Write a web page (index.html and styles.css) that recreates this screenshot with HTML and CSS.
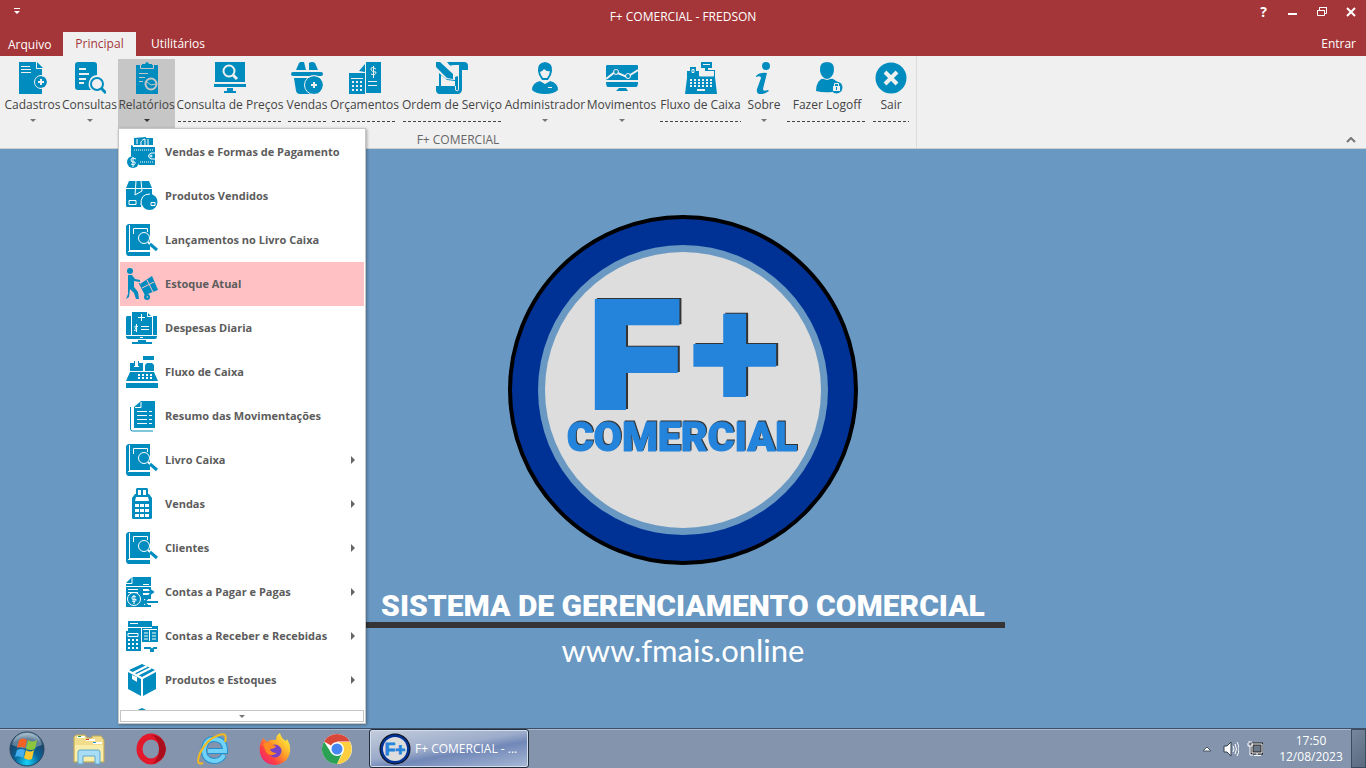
FILE: index.html
```html
<!DOCTYPE html>
<html lang="pt-BR">
<head>
<meta charset="utf-8">
<title>F+ COMERCIAL - FREDSON</title>
<link rel="stylesheet" href="styles.css">
</head>
<body>
<svg class="sprite" aria-hidden="true">
  <symbol id="doc-add" viewBox="0 0 32 32"><path d="M2 0h17v7h6v6a7 7 0 0 0 0 13v6H2z"/><path d="M20 0l6 6h-6z"/><path class="cut" d="M4 4.500h9M4 7.500h10M4 10.500h10"/><circle cx="24" cy="20" r="6"/><circle class="cut" cx="24" cy="20" r="6.500"/><path class="cut w2" d="M24 17v6M21 20h6"/></symbol>
  <symbol id="doc-search" viewBox="0 0 32 32"><path d="M4 0h16q3 0 3 3v10a9 9 0 0 0-6 15H4q-3 0-3-3V3q0-3 3-3z"/><path class="cut w2" d="M5 7h7M5 12h10M5 17h7M5 21h5"/><circle class="line w2" cx="23" cy="22" r="6"/><path class="line w3" d="M27 26l5 5"/></symbol>
  <symbol id="clipboard" viewBox="0 0 32 32"><path d="M5 3h22v29H5z"/><path class="cut" d="M9.500 3v3.500h13V3"/><path d="M11 5V2h3q2-4 4 0h3v3z"/><path class="cut" d="M8 11.500h9M8 15.500h6M8 19.500h4"/><circle class="cut w2" cx="20" cy="22" r="5.500"/><path class="cut" d="M16 20l4 3 5-1"/></symbol>
  <symbol id="monitor-search" viewBox="0 0 32 32"><path d="M1 0h30v20H1zM0 22h32v3H0zM13 26h6v3h3v2H10v-2h3z"/><path class="cut" d="M0 21.500h32"/><circle class="cut w2" cx="15" cy="9" r="5.500"/><path class="cut w3" d="M19 13l4 4"/></symbol>
  <symbol id="basket" viewBox="0 0 32 32"><path d="M5 8l3-7q2-2 5-1l2 8h3V1q3-2 6 0l3 7z"/><rect y="10" width="32" height="4" rx="2"/><path d="M3 16h26v14q-1 2-3 2H8q-2 0-3-3z"/><path class="cut" d="M2 14.500h28"/><circle cx="23" cy="23" r="9"/><circle class="cut" cx="23" cy="23" r="9.500"/><path class="cut w2" d="M23 20v6M20 23h6"/></symbol>
  <symbol id="budget" viewBox="0 0 32 32"><path d="M17 0h15v31H17z"/><path d="M10 9l6-7v8zM0 11h16v21H0z"/><path class="cut" d="M2 16.500h12M16.500 0v31M19 19.500h9M19 23.500h9"/><path class="cut w2 dot" d="M3 20h11M3 24h11M3 28h11"/><path class="cut" d="M27 7q-5-3-5 0t5 3q0 4-5 2M24.500 4v12"/></symbol>
  <symbol id="scroll" viewBox="0 0 32 32"><path d="M0 0l4-0 13 12v5l-6-1L0 5zM11 0h17q4 0 4 4v4h-6v20q-1 4-4 4H3q-3-1-3-4v-4h3V11l7 6 9 1V10z"/><path class="hole" d="M5 13l6 5 8 1v5H5zM18 3h4v11l-3 1v-3l-7-8z"/><path class="cut" d="M22.500 3v24q0 3-3 1v-4"/></symbol>
  <symbol id="person" viewBox="0 0 32 32"><path d="M9 9q-1-8 7-9 8 1 7 9l-1 4-3 5h-6l-3-5zM3 28q0-7 8-9l5 3 5-3q8 2 8 9-4 4-13 4T3 28z"/><path class="hole" d="M11 10q3-1 4-3 3 3 6 2l-1 4-2 3h-4l-2-3z"/><path class="cut" d="M10 18l6 3 6-3M19 25.500h4"/></symbol>
  <symbol id="monitor-chart" viewBox="0 0 32 32"><path d="M1 3h30q1 0 1 1v14H0V4zM0 20h32q0 5-2 5H2q-2 0-2-5zM13 26h7l2 3H10z"/><path class="cut w2" d="M0 17l9-7 12 5L32 8"/><circle cx="10" cy="10" r="2"/><circle class="cut" cx="10" cy="10" r="2.500"/><circle cx="22" cy="14" r="2"/><circle class="cut" cx="22" cy="14" r="2.500"/></symbol>
  <symbol id="register" viewBox="0 0 32 32"><path d="M16 0h11v6h-4v2h7v7l2 17H0L2 16V9h3V5h6v4h9V6h-4z"/><path class="cut" d="M18 2.500h7M7 7.500h2v3H7zM28.500 9v5h-14V9"/><path class="hole" d="M15 9h13v5H15zM12 27h8v2h-8z"/><path class="cut w2 dot" d="M5 18h22M5 21h22M5 24h22"/></symbol>
  <symbol id="info" viewBox="0 0 32 32"><circle cx="18" cy="4" r="4"/><path d="M8 14q4-4 11-3l-4 16q0 3 5 1l1 1q-6 4-10 3-3-1-2-5l4-11q0-3-5-1z"/></symbol>
  <symbol id="person-lock" viewBox="0 0 32 32"><path d="M9 7q0-7 7-7t7 7q0 6-4 9 5 1 8 5-7 0-6 9-9 1-16-1 0-11 8-13-4-3-4-9z"/><circle cx="25.500" cy="25.500" r="6"/><path class="hole" d="M22 24h7v5h-7z"/><path class="cut" d="M23.500 24v-2.500h4V24"/><path class="line" d="M25.500 25v3"/><path class="cut" d="M11 16q5 3 10 0"/></symbol>
  <symbol id="exit" viewBox="0 0 32 32"><circle cx="16" cy="16" r="15.500"/><path class="cut w4" d="M10 10l12 12M22 10L10 22"/></symbol>

  <symbol id="wallet" viewBox="0 0 32 32"><path d="M8 9V2l12-1v1h7v7zM7 10h22v19H13q-1-7-8-9V9z"/><path class="cut" d="M7 10.500h22M11 3v5M15 9q-1-5 4-6v7M22 3v7"/><path class="cut dash" d="M8 14h20M14 26h14"/><path class="cut" d="M29 17h-4q-5 3 0 6h4"/><circle class="cut" cx="25" cy="20" r="1"/><circle cx="7" cy="26" r="6"/><path class="cut" d="M10 23q-5-2-5 1t4 2q1 4-4 2M7 21v10"/></symbol>
  <symbol id="package-sold" viewBox="0 0 32 32"><path d="M3 1h20l3 7v7q-10-1-11 12H1q-1 0-1-2V8z"/><path class="cut" d="M0 8.500h26M10 1L9 15l7-4-1-10M3 20.500h7v4H3z"/><circle cx="23.500" cy="22" r="8"/><path class="cut" d="M15 25q-1-11 9-11M25 22.500h4v3h-4z"/></symbol>
  <symbol id="book" viewBox="0 0 32 32"><path d="M2 0h22v26H3v2h21v4H2q-2-1-2-3V2z"/><path class="cut" d="M3.500 1v26M2 27.500h22M7.500 10V4.500h14V8"/><circle cx="18" cy="14" r="6"/><circle class="cut" cx="18" cy="14" r="5.500"/><path class="cut w2" d="M22 18l4 4"/><path class="line w3" d="M24 20l7 6"/></symbol>
  <symbol id="porter" viewBox="0 0 32 32"><circle cx="4" cy="3" r="3"/><path d="M2 7h4l3 4 5 1v2l-6-1v6l4 5 1 7h-3l-2-6-4-4-1 8-3 2H0l2-5V11z"/><path d="M14 16l12-8 6 14-13 5z"/><path class="line" d="M13 15l8 15"/><circle class="line w2" cx="21" cy="29" r="2"/><path class="cut" d="M16 20l12-6M21 12l6 12"/></symbol>
  <symbol id="monitor-bill" viewBox="0 0 32 32"><path d="M6 0h15l5 5v18H6zM1 4h4v19H0V5zM27 4h4v19h-4zM0 24h31q0 3-2 3H2q-2 0-2-3zM12 28h8v2h6v2H6v-2h6z"/><path class="cut" d="M21.500 0v4.500H26M15.500 2v7M12 5.500h7M15 14.500h8M15 17.500h8M12 14.500q-4-1-3 1t2 2-3 1M10.500 12v8M14 25.500h3"/></symbol>
  <symbol id="register-small" viewBox="0 0 32 32"><path d="M4 7h4v4h5V7h4v8H4zM8 5h5v5H8zM19 9l2-2h5l2 2v6h-9zM17 0h11v4H17zM4 16h24l4 9H0zM0 27h32v5H0z"/><path class="hole" d="M9 5h3v5H9z"/><path class="cut w2 dot" d="M12 19h14M12 22h14"/></symbol>
  <symbol id="pages" viewBox="0 0 32 32"><path d="M8 7l7-6h14v27H8z"/><path class="line" d="M4.500 7v22q0 2 2 2H27"/><path class="cut" d="M9 7.500h6V2M11 11.500h10M23 11.500h3M11 15.500h10M23 15.500h3M11 19.500h10M23 19.500h3M11 23.500h10M23 23.500h3"/></symbol>
  <symbol id="calculator" viewBox="0 0 32 32"><path d="M11 0h10q1 0 1 2v4h1l3 4v20q0 1-2 1H8q-2 0-2-1V10l3-4h1V2q0-2 1-2z"/><path class="hole" d="M12 2h3v5h-3zM17 2h3v5h-3zM10 9h12l1 4H9zM9 16h4v3H9zM14 16h4v3h-4zM19 16h4v3h-4zM9 21h4v3H9zM14 21h4v3h-4zM19 21h4v3h-4zM9 26h4v3H9zM14 26h4v3h-4zM19 26h4v3h-4z"/></symbol>
  <symbol id="bill-pay" viewBox="0 0 32 32"><path d="M6 1h19v30H0V7z"/><path class="cut" d="M0 7.500h6V1M17 8.500h6M0 10.500h25M2 13.500h10M2 16.500h10"/><circle cx="8" cy="23" r="6"/><circle class="cut" cx="8" cy="23" r="6.500"/><path class="cut" d="M10 21q-4-2-4 1t4 1q0 4-4 2M8 19v9"/><path class="cut w6" d="M17 16h9M18 26h14"/><path class="line w2" d="M17 16h9M23 13l4 3-4 3M32 26H19M22 22l-4 4 4 4"/></symbol>
  <symbol id="bill-receive" viewBox="0 0 32 32"><path d="M2 1h24v6H2zM2 8h24v4H2zM15 6h17v16H15zM0 11h15v20H0z"/><path class="cut" d="M2 7.500h24M4 3.500h8M15.500 8v23M17 9.500h14M23.500 10v11M18 13h4M18 16h4M18 19h4M26 13h4M26 16h4M26 19h4M2 13.500h10v3H2z"/><path class="cut w2 dot" d="M2 20h12M2 24h12M2 28h12"/><path class="line w2" d="M18 28h6l2 2 2-2h3M24 31h4"/></symbol>
  <symbol id="box" viewBox="0 0 32 32"><path d="M16 0l13 6-13 7L3 6zM2 8l13 7v17L2 25zM30 8v17l-13 7V15z"/><path class="cut w2" d="M7 9L21 2M11 11L25 4"/><path d="M6 11l5 2v5l-5-3z" class="hole"/></symbol>
</svg>

<header>
  <div class="titlebar">
    <button class="quick" aria-label="Personalizar acesso rápido"><svg width="6" height="7"><path d="M0 0h6v1H0zM0 3h6L3 6z"/></svg></button>
    <h1>F+ COMERCIAL - FREDSON</h1>
    <div class="window-buttons">
      <button aria-label="Ajuda"><b>?</b></button>
      <button aria-label="Minimizar"><svg width="12" height="12"><path d="M1 7h9v2H1z"/></svg></button>
      <button aria-label="Restaurar"><svg width="12" height="12"><path class="outline" d="M1.500 4.500h7v5h-7zM3.500 4V1.500h7v6H9"/><path d="M1 4h8v1H1zM3 1h8v1H3z"/></svg></button>
      <button aria-label="Fechar"><svg width="12" height="12"><path class="outline thick" d="M2 2l8 8M10 2l-8 8"/></svg></button>
    </div>
  </div>
  <nav class="tabs">
    <button class="file">Arquivo</button>
    <button class="selected">Principal</button>
    <button>Utilitários</button>
    <button class="login">Entrar</button>
  </nav>
</header>

<section class="ribbon">
  <div class="group">
    <div class="tools">
      <button><svg><use href="#doc-add"/></svg>Cadastros<i class="down"></i></button>
      <button><svg><use href="#doc-search"/></svg>Consultas<i class="down"></i></button>
      <div class="open">
        <button aria-expanded="true"><svg><use href="#clipboard"/></svg>Relatórios<i class="down"></i></button>
        <div class="menu">
          <ul>
            <li><button><svg><use href="#wallet"/></svg>Vendas e Formas de Pagamento</button></li>
            <li><button><svg><use href="#package-sold"/></svg>Produtos Vendidos</button></li>
            <li><button><svg><use href="#book"/></svg>Lançamentos no Livro Caixa</button></li>
            <li><button class="active"><svg><use href="#porter"/></svg>Estoque Atual</button></li>
            <li><button><svg><use href="#monitor-bill"/></svg>Despesas Diaria</button></li>
            <li><button><svg><use href="#register-small"/></svg>Fluxo de Caixa</button></li>
            <li><button><svg><use href="#pages"/></svg>Resumo das Movimentações</button></li>
            <li><button class="sub"><svg><use href="#book"/></svg>Livro Caixa</button></li>
            <li><button class="sub"><svg><use href="#calculator"/></svg>Vendas</button></li>
            <li><button class="sub"><svg><use href="#book"/></svg>Clientes</button></li>
            <li><button class="sub"><svg><use href="#bill-pay"/></svg>Contas a Pagar e Pagas</button></li>
            <li><button class="sub"><svg><use href="#bill-receive"/></svg>Contas a Receber e Recebidas</button></li>
            <li><button class="sub"><svg><use href="#box"/></svg>Produtos e Estoques</button></li>
            <li><button aria-label="Mais"><svg><use href="#box"/></svg></button></li>
          </ul>
          <button class="more" aria-label="Rolar para baixo"><i class="down"></i></button>
        </div>
      </div>
      <button><svg><use href="#monitor-search"/></svg>Consulta de Preços<i class="dashes"></i></button>
      <button><svg><use href="#basket"/></svg>Vendas<i class="dashes"></i></button>
      <button><svg><use href="#budget"/></svg>Orçamentos<i class="dashes"></i></button>
      <button><svg><use href="#scroll"/></svg>Ordem de Serviço<i class="dashes"></i></button>
      <button><svg><use href="#person"/></svg>Administrador<i class="down"></i></button>
      <button><svg><use href="#monitor-chart"/></svg>Movimentos<i class="down"></i></button>
      <button><svg><use href="#register"/></svg>Fluxo de Caixa<i class="dashes"></i></button>
      <button><svg><use href="#info"/></svg>Sobre<i class="down"></i></button>
      <button><svg><use href="#person-lock"/></svg>Fazer Logoff<i class="dashes"></i></button>
      <button><svg><use href="#exit"/></svg>Sair<i class="dashes"></i></button>
    </div>
    <p>F+ COMERCIAL</p>
  </div>
  <button class="collapse" aria-label="Recolher a faixa"><svg width="10" height="6"><path d="M1 5l4-4 4 4"/></svg></button>
</section>

<main>
  <svg class="logo" viewBox="0 0 350 350" role="img" aria-label="F+ Comercial">
    <circle cx="175" cy="175" r="173" fill="#003296" stroke="#000" stroke-width="4"/>
    <circle cx="175" cy="175" r="145" fill="#6998c2"/>
    <circle cx="175" cy="175" r="138" fill="#ddd"/>
    <g class="mark">
      <text class="letter" x="82" y="190">F</text>
      <text class="plus" x="182" y="191">+</text>
    </g>
    <text class="word" x="174" y="236">COMERCIAL</text>
  </svg>
  <h2>SISTEMA DE GERENCIAMENTO COMERCIAL</h2>
  <p>www.fmais.online</p>
</main>

<footer class="taskbar">
  <button class="start" aria-label="Iniciar"><svg width="38" height="38" viewBox="0 0 38 38">
    <defs><radialGradient id="orb" cx=".5" cy=".9" r=".9"><stop offset="0" stop-color="#16d4fa"/><stop offset=".4" stop-color="#08659b"/><stop offset=".75" stop-color="#1a456a"/><stop offset="1" stop-color="#9fbdce"/></radialGradient></defs>
    <circle cx="19" cy="19" r="17" fill="url(#orb)" stroke="#28435d"/><path d="M4 15q3-11 15-12 12 1 15 12-15 7-30 0z" fill="#fff" opacity=".3"/>
    <path d="M11 10q4-3 8 0l-2 8q-4-2-8 0z" fill="#f26125"/><path d="M20 10q4 3 9 0l-2 9q-4 2-9 0z" fill="#8cc63e"/><path d="M9 20q4-2 8 0l-2 8q-4-3-8-1z" fill="#45aef0"/><path d="M18 20q4 3 8 0l-2 9q-4 2-8-1z" fill="#fdc82d"/></svg></button>
  <button aria-label="Explorador"><svg width="32" height="32" viewBox="0 0 32 32"><path d="M1 4l2-2h9l2 3h5V3h9l3 4v22H1z" fill="#f0dc8b" stroke="#c6ad55"/><path d="M4 3h8v2H4z" fill="#fff"/><path d="M5 3h3v1H5z" fill="#22a047"/><path d="M13 6h9v2h-9z" fill="#fff"/><path d="M13 6h3v1h-3z" fill="#d33"/><path d="M20 9h9v2h-9z" fill="#fff"/><path d="M20 9h3v1h-3z" fill="#2a91d9"/><path d="M2 12h28v16H2z" fill="#f8eda9"/><path d="M5 31V19q0-2 2-2h18q2 0 2 2v12h-5v-8H10v8z" fill="#a9dcf5" stroke="#5fa9d0"/></svg></button>
  <button aria-label="Opera"><svg width="32" height="32" viewBox="0 0 32 32"><ellipse cx="16" cy="16" rx="11.500" ry="12.500" fill="none" stroke="#e3192b" stroke-width="6"/><path d="M22 3q8 3 9 13-1 10-9 13l-5 2q7-5 7-15T17 2z" fill="#aa0d1b"/></svg></button>
  <button aria-label="Internet Explorer"><svg width="32" height="32" viewBox="0 0 32 32"><path d="M27 22q-3 6-10 6-10-1-10-11Q8 6 17 6q11 0 11 12H11" fill="none" stroke="#238fd0" stroke-width="6"/><path d="M27 22q-3 6-10 6-10-1-10-11Q8 6 17 6q11 0 11 12H11" fill="none" stroke="#6fd2f6" stroke-width="4"/><path d="M28 9q3-10-6-7Q10 6 3 20q-5 13 3 10" fill="none" stroke="#f3bb20" stroke-width="2"/></svg></button>
  <button aria-label="Firefox"><svg width="32" height="32" viewBox="0 0 32 32"><defs><linearGradient id="fox" x1="1" y1="0" x2="0" y2="1"><stop offset=".1" stop-color="#fff43d"/><stop offset=".45" stop-color="#ff9b29"/><stop offset=".7" stop-color="#ff3f44"/><stop offset="1" stop-color="#e31587"/></linearGradient></defs><path d="M2 9l2-4 4 4q3-3 9-2 0-5 4-7 1 5 6 8l1-2q4 6 3 13-2 11-14 13Q4 32 1 20q-1-6 1-11z" fill="url(#fox)"/><circle cx="16" cy="18" r="6.500" fill="#7542c8"/><path d="M4 11q5-3 9 1l4 1q-1 3-6 3 1 4 7 4-7 5-11-1z" fill="#ff8a22"/></svg></button>
  <button aria-label="Chrome"><svg width="32" height="32" viewBox="0 0 32 32"><circle cx="16" cy="16" r="15" fill="#fff"/><path d="M16 16L3 8.500A15 15 0 0 1 29 8.500H16z" fill="#d94739"/><path d="M16 16h7L16 31A15 15 0 0 1 3 8.500l7 11z" fill="#2ba253"/><path d="M16 9h13A15 15 0 0 1 16 31l6-11z" fill="#fdcf3f"/><circle cx="16" cy="16" r="7" fill="#fff"/><circle cx="16" cy="16" r="5.500" fill="#4687f1"/></svg></button>
  <button class="running"><svg width="32" height="32"><circle cx="16" cy="16" r="15.500" fill="#111"/><circle cx="16" cy="16" r="14.500" fill="#003296"/><circle cx="16" cy="16" r="12" fill="#ddd"/><text class="fplus-text" x="16" y="22" text-anchor="middle">F+</text></svg>F+ COMERCIAL - ...</button>
  <div class="tray">
    <button aria-label="Ícones ocultos"><svg width="10" height="6"><path d="M1 5l4-4 4 4z" fill="#fff" stroke="#4b5868"/></svg></button>
    <button aria-label="Volume"><svg width="16" height="16" viewBox="0 0 16 16"><path d="M1 5h3l4-4v14l-4-4H1z" fill="#fff" stroke="#333f4d"/><path d="M10 5q2 3 0 6M12 3q3 5 0 10M14 1q4 7 0 14" fill="none" stroke="#fff"/></svg></button>
    <button aria-label="Rede"><svg width="16" height="16" viewBox="0 0 16 16"><path d="M5 3h10v9H5z" fill="#6b7887" stroke="#222" stroke-width="3"/><path d="M5 3h10v9H5zM7 14.500h7M10 12v2M1 2v3h4V2M2 0v2M4 0v2M3 5v9h3" fill="none" stroke="#fff"/></svg></button>
    <time datetime="2023-08-12T17:50"><span>17:50</span><span>12/08/2023</span></time>
    <button class="desktop" aria-label="Mostrar área de trabalho"></button>
  </div>
</footer>
</body>
</html>
```
FILE: styles.css
```css
* { box-sizing: border-box; }
body {
  --blue: #008cbe;
  --cut: #f0f0f0;
  margin: 0;
  min-height: 100vh;
  display: flex;
  flex-direction: column;
  font: 12px/16px "Open Sans", "Noto Sans", sans-serif;
  color: #444;
  background: #6998c2;
}
button { border: 0; padding: 0; margin: 0; background: none; font: inherit; color: inherit; white-space: nowrap; }
h1, h2, p, ul { margin: 0; padding: 0; }
.sprite { position: absolute; width: 0; height: 0; }

.cut { fill: none; stroke: var(--cut); }
.hole { fill: var(--cut); }
.line { fill: none; stroke: var(--blue); }
.w2 { stroke-width: 2; }
.w3 { stroke-width: 3; }
.w4 { stroke-width: 4; }
.w6 { stroke-width: 6; }
.dot { stroke-dasharray: 2 2; }
.dash { stroke-dasharray: 1 1; }

header { background: #a43639; color: #fff; }
.titlebar { height: 32px; display: grid; grid-template-columns: 1fr auto 1fr; align-items: start; }
.titlebar svg { fill: #fff; display: block; }
.titlebar h1 { font-size: 12px; font-weight: 400; line-height: 34px; }
.quick { justify-self: start; margin: 8px 0 0 14px; }
.window-buttons { justify-self: end; display: flex; padding-right: 1px; }
.window-buttons button { width: 29px; height: 24px; display: grid; place-items: center; }
.window-buttons b { font-size: 14px; }
.outline { fill: none; stroke: #fff; }
.thick { stroke-width: 2; }
.tabs { display: flex; height: 24px; padding: 0 10px 0 8px; }
.tabs .file { width: 43px; margin-right: 12px; padding-top: 2px; text-align: left; }
.tabs .selected { width: 73px; margin-right: 15px; background: #f0f0f0; color: #a43639; }
.tabs .login { margin-left: auto; }

.ribbon { display: flex; justify-content: space-between; align-items: flex-end; background: #f0f0f0; border-bottom: 1px solid #cfcfcf; }
.group { padding: 3px 4px 0; border-right: 1px solid #dcdcdc; }
.group p { text-align: center; height: 20px; padding-top: 4px; color: #666; }
.tools { display: grid; grid-template-columns: 57px 57px 57px 110px 44px 71px 104px 82px 71px 87px 40px 86px 42px; }
.tools > button, .open > button { width: 100%; height: 69px; padding-top: 3px; display: flex; flex-direction: column; align-items: center; justify-content: flex-start; line-height: 22px; }
.tools svg { width: 32px; height: 32px; flex: none; fill: var(--blue); }
.down { border: 3px solid transparent; border-top-color: #777; border-bottom: 0; margin-top: 3px; }
.dashes { align-self: stretch; height: 1px; margin: 5px 3px 0; background: repeating-linear-gradient(90deg, #444 0 3px, transparent 3px 5px); }
.open { position: relative; --cut: #c6c6c6; background: #c6c6c6; }
.open > button > .down { border-top-color: #333; }
.collapse { padding: 0 10px 5px; }
.collapse svg { fill: none; stroke: #777; stroke-width: 2; display: block; }

.menu { position: absolute; z-index: 1; top: 100%; left: 0; width: 248px; padding: 1px; --cut: #fff; background: #fff; border: 1px solid #c6c6c6; box-shadow: 1px 1px 3px #0005; }
.menu ul { list-style: none; max-height: calc(100vh - 188px); overflow: hidden; }
.menu li button { display: flex; align-items: center; gap: 7px; width: 100%; height: 44px; padding: 0 9px 0 6px; font-size: 11px; font-weight: 700; color: #5c5c5c; }
.menu .active { background: #ffc1c4; --cut: #ffc1c4; }
.sub::after { content: ""; margin-left: auto; border: 4px solid transparent; border-left-color: #666; border-right: 0; }
.more { display: grid; place-items: center; width: 100%; height: 12px; border: 1px solid #c6c6c6; }
.more .down { margin: 0; }

main { flex: 1; display: flex; flex-direction: column; align-items: center; padding-top: 66px; color: #fff; }
.logo { width: 350px; height: 350px; }
.mark, .word { font-family: "Liberation Sans", sans-serif; font-weight: 700; fill: #2484dc; stroke: #2484dc; }
.mark { filter: drop-shadow(2px -1px 0 #333); }
.letter { font-size: 147px; stroke-width: 10px; }
.plus { font-size: 153px; stroke-width: 6px; }
.word { font-family: Roboto, "Liberation Sans", sans-serif; font-size: 41px; font-weight: 900; stroke-width: 1px; text-anchor: middle; filter: drop-shadow(1px -1px 0 #333); }
main h2 { width: 644px; margin-top: 24px; padding-top: 1px; text-align: center; font: 900 30px/32px Roboto, "Liberation Sans", sans-serif; white-space: nowrap; border-bottom: 6px solid #373435; }
main p { font: 31px/44px Lato, "Open Sans", sans-serif; }

.taskbar { display: flex; height: 40px; background: #8394ac; border-top: 1px solid #3f5066; box-shadow: inset 0 1px #a9bad0; color: #fff; }
.taskbar button { width: 62px; display: grid; place-items: center; }
.taskbar .start { width: 54px; margin-right: 4px; }
.taskbar .running { display: flex; align-items: center; gap: 4px; width: 160px; padding: 0 9px; margin-left: 1px; border: 1px solid #222d3d; border-radius: 3px; background: linear-gradient(170deg, #c4cddd, #9dacca 45%, #7188b8 60%, #a8b8d5); box-shadow: inset 0 0 0 1px #d4ddeb; }
.fplus-text { font: 700 17px "Liberation Sans", sans-serif; fill: #2484dc; stroke: #2484dc; }
.tray { display: flex; margin-left: auto; align-items: center; }
.taskbar .tray button { width: 24px; }
.tray time { display: flex; flex-direction: column; width: 84px; padding-left: 4px; text-align: center; }
.taskbar .tray .desktop { width: 15px; height: 39px; border: 1px solid #3e4c5f; background: linear-gradient(135deg, #76869c, #5a6a80); }
```
